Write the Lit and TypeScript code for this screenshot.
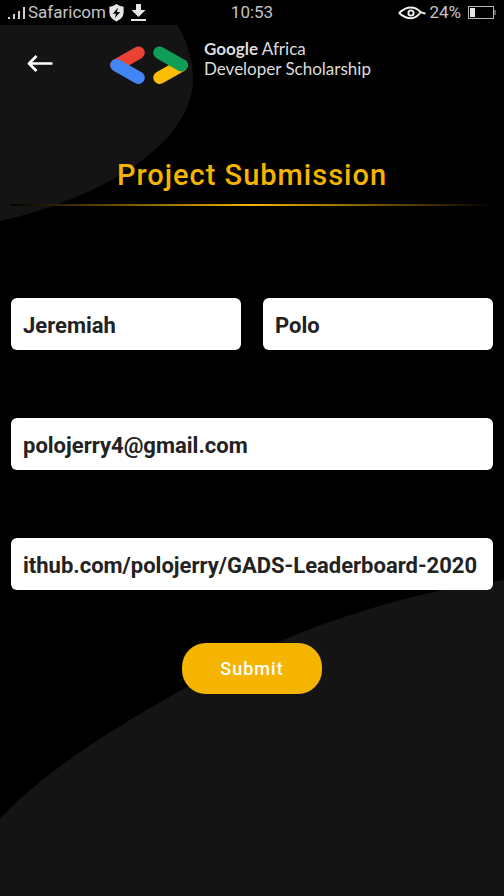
import { LitElement, html, css } from "lit";
import { customElement } from "lit/decorators.js";

@customElement("status-bar")
class StatusBar extends LitElement {
  static styles = css`
    :host {
      display: grid;
      grid-template-columns: 1fr auto 1fr;
      align-items: center;
      height: 25px;
      padding: 0 8px;
      background: #000;
      color: #c4c4c4;
      font: 400 17px/25px Roboto, sans-serif;
    }
    .side {
      display: flex;
      align-items: center;
      gap: 3px;
    }
    .end {
      justify-content: flex-end;
    }
    svg {
      display: block;
      flex: none;
    }
    .shield {
      margin-right: 4px;
    }
    .battery {
      margin-left: 4px;
    }
  `;

  render() {
    return html`
      <div class="side">
        <svg width="17" height="14" viewBox="0 0 17 14" fill="#d0d0d0" aria-hidden="true">
          <path d="M0 11h2v2H0zM5 8h2v5H5zM10 5h2v8h-2zM15 1h2v12h-2z" />
        </svg>
        <span>Safaricom</span>
        <svg class="shield" width="15" height="18" viewBox="0 0 15 18" aria-hidden="true">
          <path d="M7.500 0Q11 2.600 14.600 2.800V9Q14 14.500 7.500 17.500Q1 14.500 .4 9V2.800Q4 2.600 7.500 0Z" fill="#e6e6e6" />
          <path d="M8.800 3.800L3.800 9.700H7L5.800 14L11.200 8H8Z" fill="#000" />
        </svg>
        <svg width="15" height="17" viewBox="0 0 15 17" fill="#e6e6e6" aria-hidden="true">
          <path d="M5 0h5v6h4.500L7.500 13 .5 6H5zM0 15h15v2H0z" />
        </svg>
      </div>
      <span>10:53</span>
      <div class="side end">
        <svg width="28" height="14" viewBox="0 0 28 14" fill="none" stroke="#f0f0f0" aria-hidden="true">
          <path d="M1 7Q7 1.500 13 1.500Q18 1.500 22 5.500Q24 7.300 27.500 7.500M1 7Q7 12.300 13 12.300Q18 12.300 22.500 6.500" stroke-width="1.900" />
          <circle cx="13" cy="7" r="2.600" stroke-width="1.900" />
        </svg>
        <span>24%</span>
        <svg class="battery" width="28" height="13" viewBox="0 0 28 13" aria-hidden="true">
          <rect x=".5" y=".5" width="25" height="12" fill="none" stroke="#b8b8b8" />
          <path d="M2 2h5v9H2z" fill="#e6e6e6" />
          <path d="M26.500 4h1v5h-1z" fill="#b8b8b8" />
        </svg>
      </div>
    `;
  }
}

@customElement("app-header")
class AppHeader extends LitElement {
  static styles = css`
    :host {
      display: flex;
      align-items: flex-start;
      padding: 14px 16px 0 16px;
    }
    .back {
      display: grid;
      place-items: center;
      width: 48px;
      height: 48px;
      margin-right: 46px;
      padding: 0;
      border: 0;
      background: none;
      cursor: pointer;
    }
    .brand {
      display: flex;
      align-items: flex-start;
      gap: 16px;
    }
    .mark {
      display: block;
      margin-top: 7px;
    }
    .name {
      margin: 0;
      color: #dcdcdc;
      font: 400 17px/20px Lato, sans-serif;
      white-space: nowrap;
    }
    .strong {
      font-weight: 700;
    }
  `;

  render() {
    return html`
      <button class="back" type="button" aria-label="Back">
        <svg width="26" height="18" viewBox="0 0 26 18" fill="none" stroke="#fff" stroke-width="2.700" aria-hidden="true">
          <path d="M25.500 9.500H2.500M9.500 2L2 9.500L9.500 17" stroke-linejoin="round" />
        </svg>
      </button>
      <div class="brand">
        <svg class="mark" width="78" height="38" viewBox="0 0 78 38" fill="none" stroke-width="12.500" stroke-linecap="round" aria-hidden="true">
          <path d="M28.500 6.700L6.500 19.200" stroke="#ea4335" />
          <path d="M6.500 19.200L28.500 31.700" stroke="#4285f4" />
          <path d="M49.500 31.700L71.500 19.200" stroke="#fbbc04" />
          <path d="M49.500 6.700L71.500 19.200" stroke="#0f9d58" />
        </svg>
        <p class="name"><span class="strong">Google</span> Africa<br />Developer Scholarship</p>
      </div>
    `;
  }
}

@customElement("app-root")
class AppRoot extends LitElement {
  static styles = css`
    :host {
      display: block;
      position: relative;
      min-height: 100vh;
      overflow: hidden;
      background: #000;
      font-family: Roboto, sans-serif;
    }
    .blob {
      position: absolute;
      display: block;
      fill: #141414;
    }
    .top {
      top: 0;
      left: 0;
    }
    .bottom {
      bottom: 0;
      left: 0;
      width: 100%;
    }
    .page {
      position: relative;
    }
    .title {
      margin: 0 11px;
      padding: 68px 0 9px;
      color: #f5b400;
      font: 500 29px/40px Roboto, sans-serif;
      letter-spacing: 1px;
      text-align: center;
    }
    .rule {
      height: 2px;
      margin: 0 11px;
      border: 0;
      background: linear-gradient(90deg, #000, #f5b400 50%, #000);
    }
    .form {
      display: grid;
      grid-template-columns: 1fr 1fr;
      gap: 68px 22px;
      padding: 92px 11px 0;
    }
    .field {
      box-sizing: border-box;
      width: 100%;
      min-width: 0;
      height: 52px;
      padding: 2px 12px 0;
      border: 0;
      border-radius: 6px;
      background: #fff;
      color: #222;
      font: 700 22px/28px Roboto, sans-serif;
    }
    .wide {
      grid-column: 1 / -1;
    }
    .submit {
      grid-column: 1 / -1;
      justify-self: center;
      width: 140px;
      height: 51px;
      margin-top: -15px;
      border: 0;
      border-radius: 24px;
      background: #f5b400;
      color: #fff;
      font: 500 18px/24px Roboto, sans-serif;
      letter-spacing: 1px;
      cursor: pointer;
    }
  `;

  render() {
    return html`
      <svg class="blob top" width="194" height="222" viewBox="0 0 194 222" aria-hidden="true">
        <path d="M0 0H160Q193 40 193 78C193 142 106 197 0 221Z" />
      </svg>
      <svg class="blob bottom" viewBox="0 0 504 316" aria-hidden="true">
        <path d="M0 239C38 197 104 153 187 107C293 47 406 12 504 0V316H0Z" />
      </svg>
      <div class="page">
        <status-bar></status-bar>
        <app-header></app-header>
        <main>
          <h1 class="title">Project Submission</h1>
          <hr class="rule" />
          <form class="form">
            <input class="field" type="text" aria-label="First name" .value=${"Jeremiah"} />
            <input class="field" type="text" aria-label="Last name" .value=${"Polo"} />
            <input class="field wide" type="email" aria-label="Email address" .value=${"polojerry4@gmail.com"} />
            <input class="field wide" type="text" aria-label="Project link" .value=${"ithub.com/polojerry/GADS-Leaderboard-2020"} />
            <button class="submit" type="button">Submit</button>
          </form>
        </main>
      </div>
    `;
  }
}
